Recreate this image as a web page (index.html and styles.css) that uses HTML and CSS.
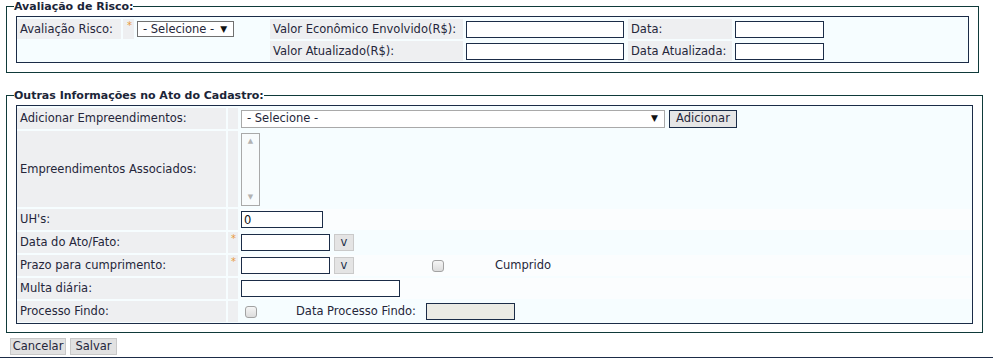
FILE: index.html
```html
<!DOCTYPE html>
<html lang="pt-BR">
<head>
    <meta charset="UTF-8">
    <title>Cadastro</title>
    <link rel="stylesheet" href="styles.css">
</head>
<body>
    <fieldset class="group group-risk">
        <legend>Avaliação de Risco:</legend>
        <div class="box">
            <table class="form-table risk-table">
                <colgroup>
                    <col class="r1"><col class="r2"><col class="r3"><col class="r4"><col class="r5"><col class="r6"><col>
                </colgroup>
                <tr>
                    <td class="lbl">Avaliação Risco:</td>
                    <td class="req"><span class="star">*</span></td>
                    <td class="fld">
                        <div class="combo combo-sm"><span>- Selecione -</span><span class="arrow">▼</span></div>
                    </td>
                    <td class="lbl">Valor Econômico Envolvido(R$):</td>
                    <td class="fld"><input type="text" class="txt w-valor"></td>
                    <td class="lbl">Data:</td>
                    <td class="fld"><input type="text" class="txt w-data"></td>
                </tr>
                <tr>
                    <td class="fld" colspan="3"></td>
                    <td class="lbl">Valor Atualizado(R$):</td>
                    <td class="fld"><input type="text" class="txt w-valor"></td>
                    <td class="lbl">Data Atualizada:</td>
                    <td class="fld"><input type="text" class="txt w-data"></td>
                </tr>
            </table>
        </div>
    </fieldset>

    <fieldset class="group group-info">
        <legend>Outras Informações no Ato do Cadastro:</legend>
        <div class="box">
            <table class="form-table info-table">
                <colgroup>
                    <col class="i1"><col class="i2"><col>
                </colgroup>
                <tr>
                    <td class="lbl">Adicionar Empreendimentos:</td>
                    <td class="req"></td>
                    <td class="fld">
                        <div class="inline">
                            <div class="combo combo-lg"><span>- Selecione -</span><span class="arrow">▼</span></div>
                            <button type="button" class="btn-add">Adicionar</button>
                        </div>
                    </td>
                </tr>
                <tr class="tall">
                    <td class="lbl">Empreendimentos Associados:</td>
                    <td class="req"></td>
                    <td class="fld">
                        <div class="listbox"><span>▲</span><span>▼</span></div>
                    </td>
                </tr>
                <tr class="alt">
                    <td class="lbl">UH's:</td>
                    <td class="req"></td>
                    <td class="fld"><input type="text" class="txt w-uh" value="0"></td>
                </tr>
                <tr>
                    <td class="lbl">Data do Ato/Fato:</td>
                    <td class="req"><span class="star">*</span></td>
                    <td class="fld">
                        <div class="inline">
                            <input type="text" class="txt w-data">
                            <button type="button" class="btn-cal">v</button>
                        </div>
                    </td>
                </tr>
                <tr class="alt">
                    <td class="lbl">Prazo para cumprimento:</td>
                    <td class="req"><span class="star">*</span></td>
                    <td class="fld">
                        <div class="inline">
                            <input type="text" class="txt w-data">
                            <button type="button" class="btn-cal">v</button>
                            <input type="checkbox" class="chk chk-cumprido">
                            <span class="chk-label">Cumprido</span>
                        </div>
                    </td>
                </tr>
                <tr class="alt">
                    <td class="lbl">Multa diária:</td>
                    <td class="req"></td>
                    <td class="fld"><input type="text" class="txt w-multa"></td>
                </tr>
                <tr class="last">
                    <td class="lbl">Processo Findo:</td>
                    <td class="req"></td>
                    <td class="fld">
                        <div class="inline">
                            <input type="checkbox" class="chk chk-findo">
                            <span class="findo-label">Data Processo Findo:</span>
                            <input type="text" class="txt w-data" disabled>
                        </div>
                    </td>
                </tr>
            </table>
        </div>
    </fieldset>

    <div class="actions">
        <button type="button" class="btn btn-cancel">Cancelar</button>
        <button type="button" class="btn btn-save">Salvar</button>
    </div>
</body>
</html>
```

FILE: styles.css
```css
body {
    margin: 0;
    background: #fff;
    color: #25263a;
    font: 11.5px/13px "DejaVu Sans", Verdana, sans-serif;
}

/* Fieldsets */
.group {
    margin: 0 14px 0 6px;
    padding: 3px 9px 9px;
    border: 1px solid #0f3a3a;
    min-width: 0;
}

.group legend {
    margin-left: -2px;
    padding: 0;
    font-size: 11px;
    line-height: 13px;
    font-weight: bold;
    color: #1b2538;
}

.group-info {
    margin: 16px 10px 0 6px;
    padding-bottom: 8px;
}

.box {
    border: 1px solid #1b2c47;
    background: #f6fdff;
    overflow: hidden;
}

/* Tables */
.form-table {
    width: calc(100% + 4px);
    margin: 0 -2px -1px;
    border-spacing: 2px;
    table-layout: fixed;
}

.form-table td {
    height: 20px;
    padding: 0 1px;
    line-height: 13px;
    vertical-align: middle;
    white-space: nowrap;
}

.form-table td.lbl {
    padding: 0 3px;
    background: #eeeff1;
}

.form-table td.req {
    padding: 0 0 0 4px;
    vertical-align: top;
    background: #eeeff1;
}

.info-table td.req {
    padding-left: 3px;
}

.info-table td {
    height: 21px;
}

.info-table tr.tall td {
    height: 76px;
}

.info-table tr.alt td.fld {
    background: #fbfdfe;
}

.star {
    display: block;
    margin-top: 2px;
    color: #e89a3c;
    font-size: 10px;
    line-height: 10px;
}

col.r1 { width: 104px; }
col.r2 { width: 11px; }
col.r3 { width: 132px; }
col.r4 { width: 193px; }
col.r5 { width: 161px; }
col.r6 { width: 104px; }

col.i1 { width: 209px; }
col.i2 { width: 10px; }

/* Controls */
.inline {
    display: flex;
    align-items: center;
}

.combo {
    display: flex;
    align-items: center;
    box-sizing: border-box;
    background: #fff;
}

.combo .arrow {
    font-size: 9px;
    color: #111;
}

.combo-sm {
    width: 97px;
    height: 16px;
    padding-left: 5px;
    gap: 6px;
    border: 1px solid #707070;
}

.combo-lg {
    justify-content: space-between;
    width: 424px;
    height: 18px;
    padding: 0 6px 0 5px;
    border: 1px solid #a9a9a9;
}

.btn-add {
    box-sizing: border-box;
    width: 68px;
    height: 18px;
    margin-left: 4px;
    padding: 0;
    border: 1px solid #1b2c47;
    border-radius: 0;
    background: #e6e6e6;
    color: #25263a;
    font: inherit;
}

.listbox {
    display: flex;
    flex-direction: column;
    justify-content: space-between;
    align-items: center;
    box-sizing: border-box;
    width: 19px;
    height: 73px;
    padding: 3px 0 4px;
    border: 1px solid #a9a9a9;
    background: #f8fbfc;
    color: #b2b2b2;
    font-size: 7px;
    line-height: 8px;
}

.txt {
    display: block;
    box-sizing: border-box;
    height: 17px;
    margin: 0;
    padding: 0 2px;
    border: 1px solid #1b2c47;
    border-radius: 0;
    background: #fff;
    color: #111;
    font: inherit;
}

.txt:disabled {
    background: #ebebe4;
}

.w-valor { width: 158px; }
.w-data { width: 89px; }
.w-uh { width: 82px; }
.w-multa { width: 159px; }

.btn-cal {
    box-sizing: border-box;
    width: 20px;
    height: 17px;
    margin-left: 4px;
    padding: 0;
    border: 1px solid #cacaca;
    border-radius: 0;
    background: #e4e4e4;
    color: #1b2c47;
    font: inherit;
}

.chk {
    appearance: none;
    box-sizing: border-box;
    width: 12px;
    height: 12px;
    margin: 0;
    border: 1px solid #a2a2a2;
    border-radius: 3px;
    background: linear-gradient(#f5f5f5, #dcdcdc);
}

.chk-cumprido { margin-left: 78px; }
.chk-label { margin-left: 51px; }

.chk-findo { margin-left: 4px; }
.findo-label { margin: 0 10px 0 39px; }

/* Footer buttons */
.actions {
    display: flex;
    gap: 4px;
    padding: 5px 0 2px 10px;
    border-bottom: 1px solid #1b2c47;
}

.btn {
    box-sizing: border-box;
    height: 17px;
    padding: 0;
    border: 1px solid #c8c8c8;
    border-radius: 0;
    background: #e1e1e1;
    color: #25263a;
    font: inherit;
}

.btn-cancel { width: 56px; }
.btn-save { width: 47px; }
```
